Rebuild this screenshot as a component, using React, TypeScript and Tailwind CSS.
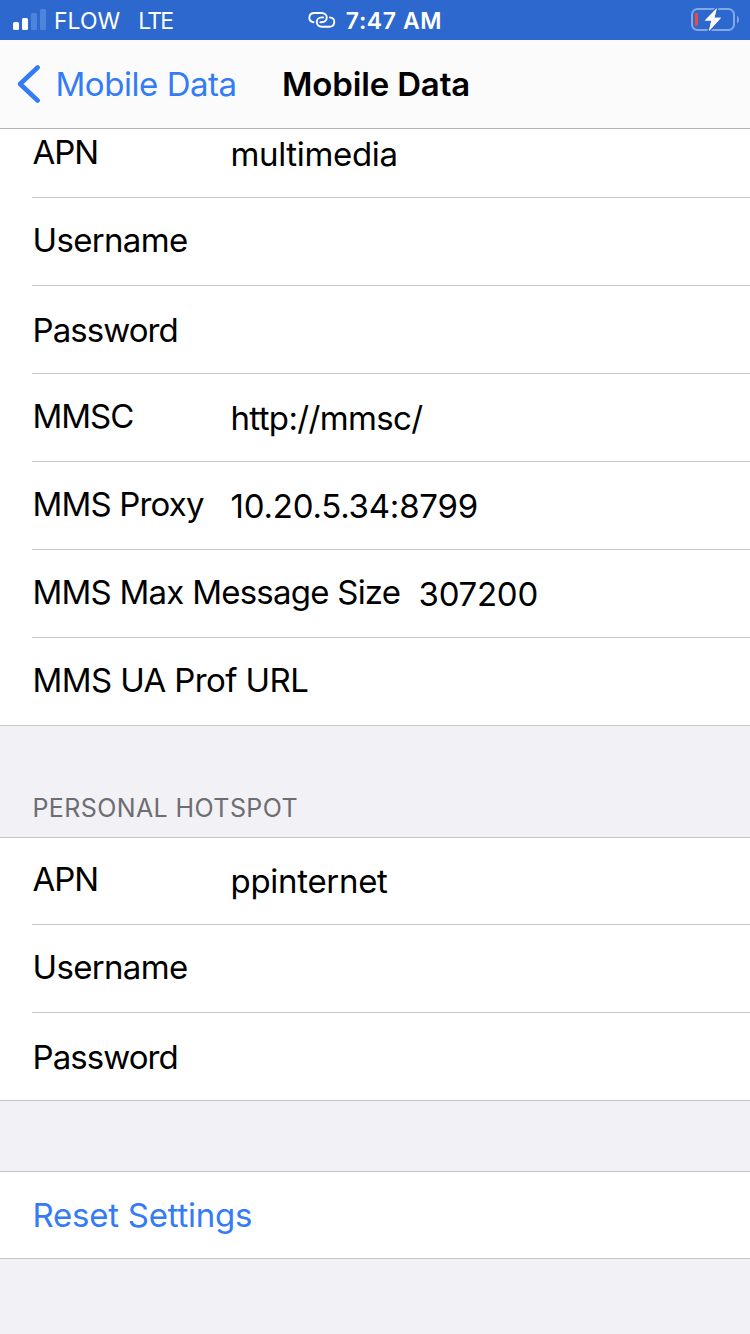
import { clsx } from 'clsx';

interface Field {
    label: string;
    value?: string;
    labelClass?: string;
    valueClass?: string;
    rowClass?: string;
}

const mmsFields: Field[] = [
    {
        label: 'APN',
        value: 'multimedia',
        labelClass: 'w-[198px] pb-[3px] tracking-[-1px]',
        valueClass: 'pt-px tracking-[-0.35px]',
    },
    { label: 'Username', labelClass: 'pb-[3px] tracking-[-0.67px]' },
    { label: 'Password', labelClass: 'pt-px tracking-[-0.93px]' },
    {
        label: 'MMSC',
        value: 'http://mmsc/',
        labelClass: 'w-[198px] pb-[3px] tracking-[-1px]',
        valueClass: 'pt-px tracking-[-0.65px]',
    },
    {
        label: 'MMS Proxy',
        value: '10.20.5.34:8799',
        labelClass: 'w-[198px] pb-[3px] tracking-[-0.82px]',
        valueClass: 'pt-px tracking-[-0.22px]',
    },
    {
        label: 'MMS Max Message Size',
        value: '307200',
        labelClass: 'w-[386px] pb-[3px] tracking-[-0.76px]',
        valueClass: 'pt-px tracking-[-0.25px]',
    },
    { label: 'MMS UA Prof URL', labelClass: 'pb-[3px] tracking-[-0.6px]' },
];

const hotspotFields: Field[] = [
    {
        label: 'APN',
        value: 'ppinternet',
        labelClass: 'w-[198px] pb-1 tracking-[-1px]',
        valueClass: 'tracking-[-0.3px]',
        rowClass: 'h-[87px]',
    },
    { label: 'Username', labelClass: 'pb-[3px] tracking-[-0.67px]' },
    { label: 'Password', labelClass: 'pt-px tracking-[-0.93px]' },
];

const FieldList = ({ fields }: { fields: Field[] }) => (
    <ul className="bg-white border-b border-[#c6c6c8]">
        {fields.map((field, i) => (
            <li
                key={field.label}
                className={clsx(
                    'ml-8 pl-[0.5px] flex items-center',
                    field.rowClass ?? 'h-[88px]',
                    i < fields.length - 1 ? 'border-b border-[#c6c6c8]' : 'mb-[-1px] pb-px',
                )}
            >
                <span className={clsx('shrink-0 whitespace-nowrap', field.labelClass)}>{field.label}</span>
                {field.value && <span className={clsx('whitespace-nowrap', field.valueClass)}>{field.value}</span>}
            </li>
        ))}
    </ul>
);

const StatusBar = () => (
    <div className="h-10 shrink-0 bg-[#2d68cf] text-white grid grid-cols-3 items-center text-[23px] leading-7">
        <div className="flex items-center pl-[13px]">
            <svg width="33" height="22" viewBox="0 0 33 22" fill="currentColor">
                <rect x="0" y="13" width="6" height="8" rx="1.5" />
                <rect x="9" y="9" width="6" height="12" rx="1.5" />
                <rect x="18" y="4" width="6" height="17" rx="1.5" fill="#4e85dc" />
                <rect x="27" y="0" width="6" height="21" rx="1.5" fill="#4e85dc" />
            </svg>
            <span className="ml-2 pt-0.5">FLOW</span>
            <span className="ml-[18px] pt-0.5 tracking-[-1.8px]">LTE</span>
        </div>
        <div className="flex items-center justify-center">
            <svg width="28" height="18" viewBox="0 0 28 18" fill="none" stroke="currentColor" strokeWidth="1.9" strokeLinecap="round">
                <path d="M5.5 11.2 C-.5 10.2 .2 2 6.5 2 H13.5 C20.5 2 20.5 11.2 13.5 11.2 H12.3" />
                <path d="M22 6.4 C28.2 7.4 27.5 15.8 21 15.8 H14 C7 15.8 7 6.4 14 6.4 H15.2" />
            </svg>
            <span className="ml-[10px] pt-0.5 font-semibold tracking-[0.6px]">7:47 AM</span>
        </div>
        <div className="flex items-center justify-end pr-[10px]">
            <svg width="50" height="26" viewBox="0 0 50 26" fill="none">
                <rect x="2" y="2" width="42" height="21" rx="5.5" stroke="#84a8e4" strokeWidth="2" />
                <path d="M47 9c2.6 1 2.6 6.4 0 7.4z" fill="#84a8e4" />
                <rect x="4.8" y="6" width="3.2" height="12.7" rx="1" fill="#ea4a42" />
                <path d="M26.8 1.3 L14.8 13.6 H21.3 L19 24 L31 10.8 H24.4 Z" fill="white" stroke="#2d68cf" strokeWidth="3" strokeLinejoin="round" paintOrder="stroke" />
                <path d="M26.8 1.3 L14.8 13.6 H21.3 L19 24 L31 10.8 H24.4 Z" fill="white" />
            </svg>
        </div>
    </div>
);

const NavBar = () => (
    <header className="h-[89px] shrink-0 bg-[#fbfbfc] border-b border-[#b2b2b4] flex items-center pl-[17px]">
        <button className="w-[265px] flex items-center text-[#347bf6]">
            <svg width="24" height="38" viewBox="0 0 24 38" fill="none" stroke="currentColor" strokeWidth="4.6" strokeLinecap="round" strokeLinejoin="round">
                <path d="M20.6 2.5 L3.1 19 L20.6 35.5" />
            </svg>
            <span className="ml-[14.5px] whitespace-nowrap tracking-[-0.45px]">Mobile Data</span>
        </button>
        <h1 className="font-semibold whitespace-nowrap tracking-[-0.15px]">Mobile Data</h1>
    </header>
);

const App = () => (
    <div className="w-[750px] h-[1334px] overflow-hidden flex flex-col bg-[#f2f1f6] text-black font-['Inter',sans-serif] text-[33px] leading-[41px]">
        <StatusBar />
        <NavBar />
        {/* The list is scrolled, so its first row runs under the nav bar */}
        <main className="flex-1 min-h-0 overflow-hidden">
            <div className="-mt-[19px]">
                <FieldList fields={mmsFields} />
                <h2 className="h-28 pl-[32.5px] pt-[66px] text-[25px] leading-8 tracking-[0.4px] text-[#6d6d72] border-b border-[#c6c6c8]">
                    PERSONAL HOTSPOT
                </h2>
                <FieldList fields={hotspotFields} />
                <button className="mt-[70px] w-full h-[88px] pl-[32.5px] bg-white border-y border-[#c6c6c8] text-left text-[#347bf6] tracking-[-0.25px]">
                    Reset Settings
                </button>
            </div>
        </main>
    </div>
);

export default App;
